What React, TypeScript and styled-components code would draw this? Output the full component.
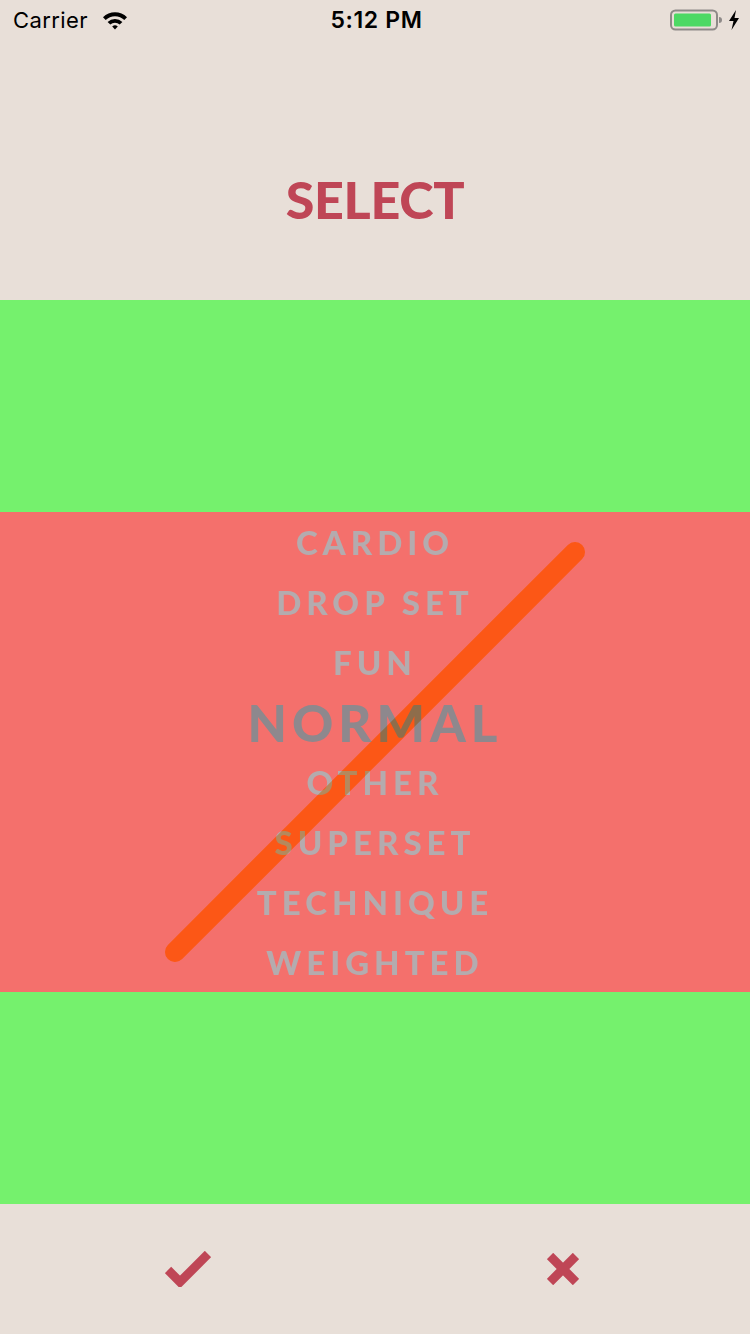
import React from "react";
import styled, { createGlobalStyle } from "styled-components";

const Global = createGlobalStyle`
  html, body { margin: 0; padding: 0; background: #e8dfd8; }
  #root { width: 750px; height: 1334px; }
`;

const Page = styled.div`
  width: 750px;
  height: 1334px;
  display: flex;
  flex-direction: column;
  background: #e8dfd8;
  overflow: hidden;
`;

const StatusBar = styled.div`
  height: 40px;
  display: grid;
  grid-template-columns: 1fr auto 1fr;
  align-items: center;
  padding: 0 10px 0 13px;
  font-family: "Inter", "Liberation Sans", sans-serif;
  color: #000;
`;

const StatusLeft = styled.div`
  display: flex;
  align-items: center;
  gap: 13px;
  font-size: 22px;
  letter-spacing: 0.4px;
`;

const StatusTime = styled.div`
  font-size: 23px;
  font-weight: 600;
  letter-spacing: 0.6px;
`;

const StatusRight = styled.div`
  display: flex;
  justify-content: flex-end;
  align-items: center;
  gap: 6px;
`;

const Header = styled.div`
  height: 260px;
  box-sizing: border-box;
  padding-top: 58px;
  display: flex;
  align-items: center;
  justify-content: center;
`;

const Title = styled.h1`
  margin: 0;
  font-family: "Lato", sans-serif;
  font-weight: 900;
  font-size: 52px;
  letter-spacing: -0.3px;
  color: #bf4656;
`;

const GreenBand = styled.div`
  height: 212px;
  background: #75f16d;
`;

const Picker = styled.div`
  position: relative;
  height: 480px;
  background: #f4706c;
  display: flex;
  flex-direction: column;
  isolation: isolate;
`;

const Item = styled.div<{ $selected?: boolean }>`
  position: relative;
  z-index: 1;
  height: 60px;
  display: flex;
  align-items: center;
  justify-content: center;
  font-family: "Lato", sans-serif;
  font-weight: 900;
  font-size: ${(p) => (p.$selected ? "51px" : "33px")};
  letter-spacing: 5px;
  color: ${(p) => (p.$selected ? "#8e888d" : "#b4abae")};
  line-height: 1;
`;

const Slash = styled.svg<{ $top?: boolean }>`
  position: absolute;
  left: 0;
  top: 0;
  width: 750px;
  height: 480px;
  z-index: ${(p) => (p.$top ? 2 : 0)};
  mix-blend-mode: ${(p) => (p.$top ? "multiply" : "normal")};
  pointer-events: none;
`;

const Footer = styled.div`
  height: 130px;
  display: flex;
`;

const FooterCell = styled.button`
  flex: 1;
  border: 0;
  background: transparent;
  padding: 0;
  display: flex;
  align-items: center;
  justify-content: center;
  cursor: pointer;
`;

const items = ["CARDIO", "DROP SET", "FUN", "NORMAL", "OTHER", "SUPERSET", "TECHNIQUE", "WEIGHTED"];

export default function App() {
  return (
    <>
      <Global />
      <Page>
        <StatusBar>
          <StatusLeft>
            <span>Carrier</span>
            <svg width="28" height="20" viewBox="0 0 26 20">
              <path d="M1 7.2 A17 17 0 0 1 25 7.2 L22.3 10 A13.2 13.2 0 0 0 3.7 10 Z" fill="#000" />
              <path d="M5.6 11.9 A10.6 10.6 0 0 1 20.4 11.9 L17.7 14.6 A6.8 6.8 0 0 0 8.3 14.6 Z" fill="#000" />
              <path d="M10.2 16.5 A4 4 0 0 1 15.8 16.5 L13 19.4 Z" fill="#000" />
            </svg>
          </StatusLeft>
          <StatusTime>5:12 PM</StatusTime>
          <StatusRight>
            <svg width="52" height="22" viewBox="0 0 52 22">
              <rect x="1" y="1.5" width="46" height="19" rx="4.5" fill="none" stroke="#8e8a88" strokeWidth="2" />
              <rect x="4" y="4.5" width="37" height="13" rx="1.5" fill="#4cd964" />
              <path d="M49 8 A3 3 0 0 1 49 14 Z" fill="#8e8a88" />
            </svg>
            <svg width="12" height="20" viewBox="0 0 12 20">
              <path d="M8 0 L1 11 L5.5 11 L3.5 20 L11 8 L6.5 8 Z" fill="#000" />
            </svg>
          </StatusRight>
        </StatusBar>
        <Header>
          <Title>SELECT</Title>
        </Header>
        <GreenBand />
        <Picker>
          <Slash viewBox="0 0 750 480">
            <line x1="575" y1="40" x2="175" y2="440" stroke="#fc6d29" strokeWidth="20" strokeLinecap="round" />
          </Slash>
          {items.map((it) => (
            <Item key={it} $selected={it === "NORMAL"}>
              {it}
            </Item>
          ))}
          <Slash $top viewBox="0 0 750 480">
            <line x1="575" y1="40" x2="175" y2="440" stroke="#ffcc88" strokeWidth="20" strokeLinecap="round" />
          </Slash>
        </Picker>
        <GreenBand />
        <Footer>
          <FooterCell aria-label="Confirm">
            <svg width="46" height="36" viewBox="0 0 46 36">
              <path d="M3 19 L15 31 L43 3" fill="none" stroke="#bf4656" strokeWidth="9" />
            </svg>
          </FooterCell>
          <FooterCell aria-label="Cancel">
            <svg width="32" height="32" viewBox="0 0 32 32">
              <path d="M3 3 L29 29 M29 3 L3 29" fill="none" stroke="#bf4656" strokeWidth="9" />
            </svg>
          </FooterCell>
        </Footer>
      </Page>
    </>
  );
}
